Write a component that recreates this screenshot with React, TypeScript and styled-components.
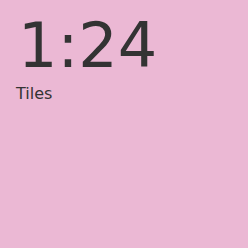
import React from "react";
import styled, { createGlobalStyle } from "styled-components";

const Global = createGlobalStyle`
  html, body { margin: 0; padding: 0; background: #ebb8d4; }
  body { font-family: "DejaVu Sans", sans-serif; }
`;

const Screen = styled.div`
  width: 248px;
  height: 248px;
  background: #ebb8d4;
  color: #333333;
  display: flex;
  flex-direction: column;
  padding: 10px 16px;
  box-sizing: border-box;
`;

const Clock = styled.div`
  font-size: 62px;
  line-height: 72px;
  padding-left: 2px;
`;

const Label = styled.div`
  font-size: 16px;
  line-height: 20px;
  margin-top: 2px;
`;

export default function App() {
  return (
    <>
      <Global />
      <Screen>
        <Clock>1:24</Clock>
        <Label>Tiles</Label>
      </Screen>
    </>
  );
}
